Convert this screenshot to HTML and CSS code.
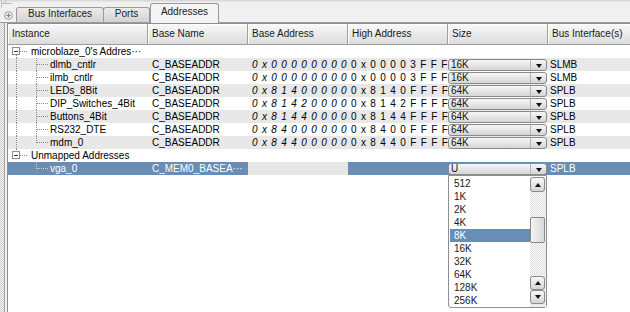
FILE: index.html
```html
<!DOCTYPE html>
<html>
<head>
<meta charset="utf-8">
<title>Addresses</title>
<link rel="stylesheet" href="styles.css">
</head>
<body>
<div class="window">
  <div class="top">
    <div class="dock">
      <svg width="14" height="22" viewBox="0 0 14 22">
        <path d="M1.5 0.5V7.5M1.5 3.5H11.5M5.5 0.5V3.5" fill="none" stroke="#b9b9b9"/>
        <circle cx="8.5" cy="15.5" r="4" fill="#e4e4e4" stroke="#a6a6a6"/>
        <path d="M6.5 15.5H10.5M8.5 13.5V17.5" stroke="#7c7c7c"/>
      </svg>
    </div>
    <div class="tab t1">Bus Interfaces</div>
    <div class="tab t2">Ports</div>
    <div class="tab active">Addresses</div>
  </div>
  <div class="body">
    <div class="splitter"></div>
    <div class="panel">
      <div class="table">
        <div class="hrow">
          <div>Instance</div>
          <div>Base Name</div>
          <div>Base Address</div>
          <div>High Address</div>
          <div>Size</div>
          <div>Bus Interface(s)</div>
        </div>

        <div class="row">
          <div class="inst">
            <svg class="tree" width="23" height="13" viewBox="0 0 23 13"><path class="dot" d="M8.5 10V13M12 6.5H19"/><rect class="box" x="4.5" y="2.5" width="7" height="7"/><path class="minus" d="M6 6.5H10"/></svg>
            <span class="lbl">microblaze_0's Addres···</span>
          </div>
          <div></div><div></div><div></div><div></div><div></div>
        </div>

        <div class="row alt">
          <div class="inst"><svg class="tree" width="42" height="13" viewBox="0 0 42 13"><path class="dot" d="M8.5 0V13M28.5 0V13M29 6.5H40"/></svg><span class="lbl">dlmb_cntlr</span></div>
          <div class="c">C_BASEADDR</div>
          <div class="c ba">0x00000000</div>
          <div class="c ha">0x00003FFF</div>
          <div class="sz"><div class="combo"><span class="cv">16K</span><span class="cb"><i class="dn"></i></span></div></div>
          <div class="c bi">SLMB</div>
        </div>

        <div class="row">
          <div class="inst"><svg class="tree" width="42" height="13" viewBox="0 0 42 13"><path class="dot" d="M8.5 0V13M28.5 0V13M29 6.5H40"/></svg><span class="lbl">ilmb_cntlr</span></div>
          <div class="c">C_BASEADDR</div>
          <div class="c ba">0x00000000</div>
          <div class="c ha">0x00003FFF</div>
          <div class="sz"><div class="combo"><span class="cv">16K</span><span class="cb"><i class="dn"></i></span></div></div>
          <div class="c bi">SLMB</div>
        </div>

        <div class="row alt">
          <div class="inst"><svg class="tree" width="42" height="13" viewBox="0 0 42 13"><path class="dot" d="M8.5 0V13M28.5 0V13M29 6.5H40"/></svg><span class="lbl">LEDs_8Bit</span></div>
          <div class="c">C_BASEADDR</div>
          <div class="c ba">0x81400000</div>
          <div class="c ha">0x8140FFFF</div>
          <div class="sz"><div class="combo"><span class="cv">64K</span><span class="cb"><i class="dn"></i></span></div></div>
          <div class="c bi">SPLB</div>
        </div>

        <div class="row">
          <div class="inst"><svg class="tree" width="42" height="13" viewBox="0 0 42 13"><path class="dot" d="M8.5 0V13M28.5 0V13M29 6.5H40"/></svg><span class="lbl">DIP_Switches_4Bit</span></div>
          <div class="c">C_BASEADDR</div>
          <div class="c ba">0x81420000</div>
          <div class="c ha">0x8142FFFF</div>
          <div class="sz"><div class="combo"><span class="cv">64K</span><span class="cb"><i class="dn"></i></span></div></div>
          <div class="c bi">SPLB</div>
        </div>

        <div class="row alt">
          <div class="inst"><svg class="tree" width="42" height="13" viewBox="0 0 42 13"><path class="dot" d="M8.5 0V13M28.5 0V13M29 6.5H40"/></svg><span class="lbl">Buttons_4Bit</span></div>
          <div class="c">C_BASEADDR</div>
          <div class="c ba">0x81440000</div>
          <div class="c ha">0x8144FFFF</div>
          <div class="sz"><div class="combo"><span class="cv">64K</span><span class="cb"><i class="dn"></i></span></div></div>
          <div class="c bi">SPLB</div>
        </div>

        <div class="row">
          <div class="inst"><svg class="tree" width="42" height="13" viewBox="0 0 42 13"><path class="dot" d="M8.5 0V13M28.5 0V13M29 6.5H40"/></svg><span class="lbl">RS232_DTE</span></div>
          <div class="c">C_BASEADDR</div>
          <div class="c ba">0x84000000</div>
          <div class="c ha">0x8400FFFF</div>
          <div class="sz"><div class="combo"><span class="cv">64K</span><span class="cb"><i class="dn"></i></span></div></div>
          <div class="c bi">SPLB</div>
        </div>

        <div class="row alt">
          <div class="inst"><svg class="tree" width="42" height="13" viewBox="0 0 42 13"><path class="dot" d="M8.5 0V13M28.5 0V7M29 6.5H40"/></svg><span class="lbl">mdm_0</span></div>
          <div class="c">C_BASEADDR</div>
          <div class="c ba">0x84400000</div>
          <div class="c ha">0x8440FFFF</div>
          <div class="sz"><div class="combo"><span class="cv">64K</span><span class="cb"><i class="dn"></i></span></div></div>
          <div class="c bi">SPLB</div>
        </div>

        <div class="row">
          <div class="inst">
            <svg class="tree" width="23" height="13" viewBox="0 0 23 13"><path class="dot" d="M8.5 0V3M12 6.5H19"/><rect class="box" x="4.5" y="2.5" width="7" height="7"/><path class="minus" d="M6 6.5H10"/></svg>
            <span class="lbl">Unmapped Addresses</span>
          </div>
          <div></div><div></div><div></div><div></div><div></div>
        </div>

        <div class="row sel">
          <div class="inst"><svg class="tree" width="42" height="13" viewBox="0 0 42 13"><path class="dot light" d="M28.5 0V7M29 6.5H40"/></svg><span class="lbl">vga_0</span></div>
          <div class="c">C_MEM0_BASEA···</div>
          <div class="c off"></div>
          <div class="c"></div>
          <div class="sz"><div class="combo"><span class="cv">U</span><span class="cb"><i class="dn"></i></span></div></div>
          <div class="c bi">SPLB</div>
        </div>
      </div>
    </div>
  </div>

  <div class="popup">
    <div class="list">
      <div class="item">512</div>
      <div class="item">1K</div>
      <div class="item">2K</div>
      <div class="item">4K</div>
      <div class="item sel">8K</div>
      <div class="item">16K</div>
      <div class="item">32K</div>
      <div class="item">64K</div>
      <div class="item">128K</div>
      <div class="item">256K</div>
    </div>
    <div class="sb">
      <div class="sbtn first"><i class="up"></i></div>
      <div class="thumb"></div>
      <div class="spacer"></div>
      <div class="sbtn"><i class="up"></i></div>
      <div class="sbtn"><i class="dn"></i></div>
    </div>
  </div>
</div>
</body>
</html>
```
FILE: styles.css
```css
* { box-sizing: border-box; }
html, body { margin: 0; padding: 0; }
body {
  width: 630px;
  height: 312px;
  overflow: hidden;
  background: #efefef;
  font-family: "Liberation Sans", Arial, sans-serif;
  font-size: 10px;
  color: #111;
}
.window {
  position: relative;
  width: 630px;
  height: 312px;
  display: flex;
  flex-direction: column;
}

/* tab bar */
.top {
  height: 23px;
  flex: none;
  display: flex;
  align-items: flex-end;
  border-bottom: 1px solid #9c9c9c;
  background: linear-gradient(#d9d9d9 0, #d9d9d9 1px, #f0f0f0 2px);
}
.dock {
  width: 16px;
  align-self: flex-start;
  flex: none;
  height: 22px;
}
.dock svg { display: block; }
.tab {
  height: 15px;
  border: 1px solid #9a9a9a;
  border-bottom: none;
  border-radius: 3px 3px 0 0;
  background: linear-gradient(#ececec, #d2d2d2);
  line-height: 11px;
  text-align: center;
  color: #222;
  flex: none;
}
.t1 { width: 88px; }
.t2 { width: 47px; margin-left: -1px; }
.tab.active {
  width: 69px;
  height: 20px;
  margin-left: 0;
  margin-bottom: -1px;
  background: #f4f4f4;
  line-height: 15px;
  position: relative;
  z-index: 1;
}

/* body */
.body {
  flex: 1;
  display: flex;
  min-height: 0;
}
.splitter {
  width: 4px;
  flex: none;
  background: repeating-conic-gradient(#cfcfcf 0 25%, #efefef 0 50%) 0 0 / 2px 2px;
}
.panel {
  flex: 1;
  min-width: 0;
  border-left: 1px solid #a6a6a6;
  padding-left: 2px;
  background: #f0f0f0;
  overflow: hidden;
}
.table {
  width: 624px;
  height: 100%;
  border-left: 1px solid #8e8e8e;
  border-top: 1px solid #8e8e8e;
  background: #fff;
  display: flex;
  flex-direction: column;
}
.hrow, .row {
  display: grid;
  grid-template-columns: 140px 100px 100px 100px 100px 83px;
  flex: none;
}
.hrow { height: 21px; }
.hrow > div {
  border-right: 1px solid #a0a0a0;
  border-bottom: 1px solid #9c9c9c;
  background: linear-gradient(#f9f9f9, #dcdcdc);
  box-shadow: inset 1px 1px 0 #fff;
  padding-left: 4px;
  line-height: 20px;
  color: #1a1a1a;
  white-space: nowrap;
  overflow: hidden;
}
.hrow > div:last-child { border-right-color: #8a8a8a; }

.row {
  height: 13px;
  line-height: 13px;
  background: #fff;
  color: #000;
}
.row.alt { background: #e8e8e8; }
.row.sel { background: #6a8db5; color: #fff; }
.row.sel .off { background: #e6e6e6; }

.c { padding-left: 4px; white-space: nowrap; }
.ba { font-style: italic; letter-spacing: 4.4px; padding-left: 4px; }
.ha { letter-spacing: 4.4px; padding-left: 3px; }
.bi { padding-left: 2px; }

.inst {
  display: flex;
  align-items: center;
  white-space: nowrap;
  overflow: hidden;
}
.tree { display: block; flex: none; }
.lbl { white-space: nowrap; }
.dot { stroke: #8a8a8a; stroke-width: 1; stroke-dasharray: 1 1; fill: none; }
.dot.light { stroke: #c3d1e1; }
.box { fill: #fff; stroke: #8c8c8c; stroke-width: 1; }
.minus { stroke: #333; stroke-width: 1; }

/* combo box */
.sz { padding: 0; }
.combo {
  display: flex;
  height: 12px;
  margin-top: 1px;
  width: 99px;
  border: 1px solid #8a8a8a;
  border-radius: 3px;
  background: linear-gradient(#f7f7f7, #d5d5d5);
  color: #111;
}
.cv { flex: 1; padding-left: 2px; line-height: 10px; }
.cb {
  width: 16px;
  flex: none;
  border-left: 1px solid #b4b4b4;
  border-radius: 0 2px 2px 0;
  display: flex;
  align-items: center;
  justify-content: center;
  padding-top: 1px;
}
.dn {
  display: block;
  width: 0;
  height: 0;
  border-left: 3px solid transparent;
  border-right: 3px solid transparent;
  border-top: 4px solid #111;
}
.up {
  display: block;
  width: 0;
  height: 0;
  border-left: 3px solid transparent;
  border-right: 3px solid transparent;
  border-bottom: 4px solid #111;
}

/* popup list */
.popup {
  position: absolute;
  left: 448px;
  top: 175px;
  width: 99px;
  height: 133px;
  background: #fff;
  border: 1px solid #8f8f8f;
  border-radius: 0 0 3px 3px;
  display: flex;
  padding: 1px 0 0 1px;
  z-index: 5;
}
.list { flex: 1; display: flex; flex-direction: column; }
.item {
  height: 13px;
  line-height: 13px;
  padding-left: 4px;
  color: #1a1a1a;
}
.item.sel { background: #6a8db5; color: #fff; }
.sb {
  width: 16px;
  flex: none;
  display: flex;
  flex-direction: column;
  padding: 0 1px 3px 0;
  background: repeating-conic-gradient(#dedede 0 25%, #fafafa 0 50%) 0 0 / 2px 2px;
}
.sbtn {
  height: 14px;
  flex: none;
  border: 1px solid #8a8a8a;
  border-radius: 3px;
  background: linear-gradient(#f8f8f8, #d4d4d4);
  display: flex;
  align-items: center;
  justify-content: center;
}
.sbtn.first { height: 15px; }
.thumb {
  margin-top: 25px;
  height: 26px;
  flex: none;
  border: 1px solid #8a8a8a;
  border-radius: 2px;
  background: linear-gradient(90deg, #f4f4f4, #d8d8d8);
}
.spacer { flex: 1; }
```
